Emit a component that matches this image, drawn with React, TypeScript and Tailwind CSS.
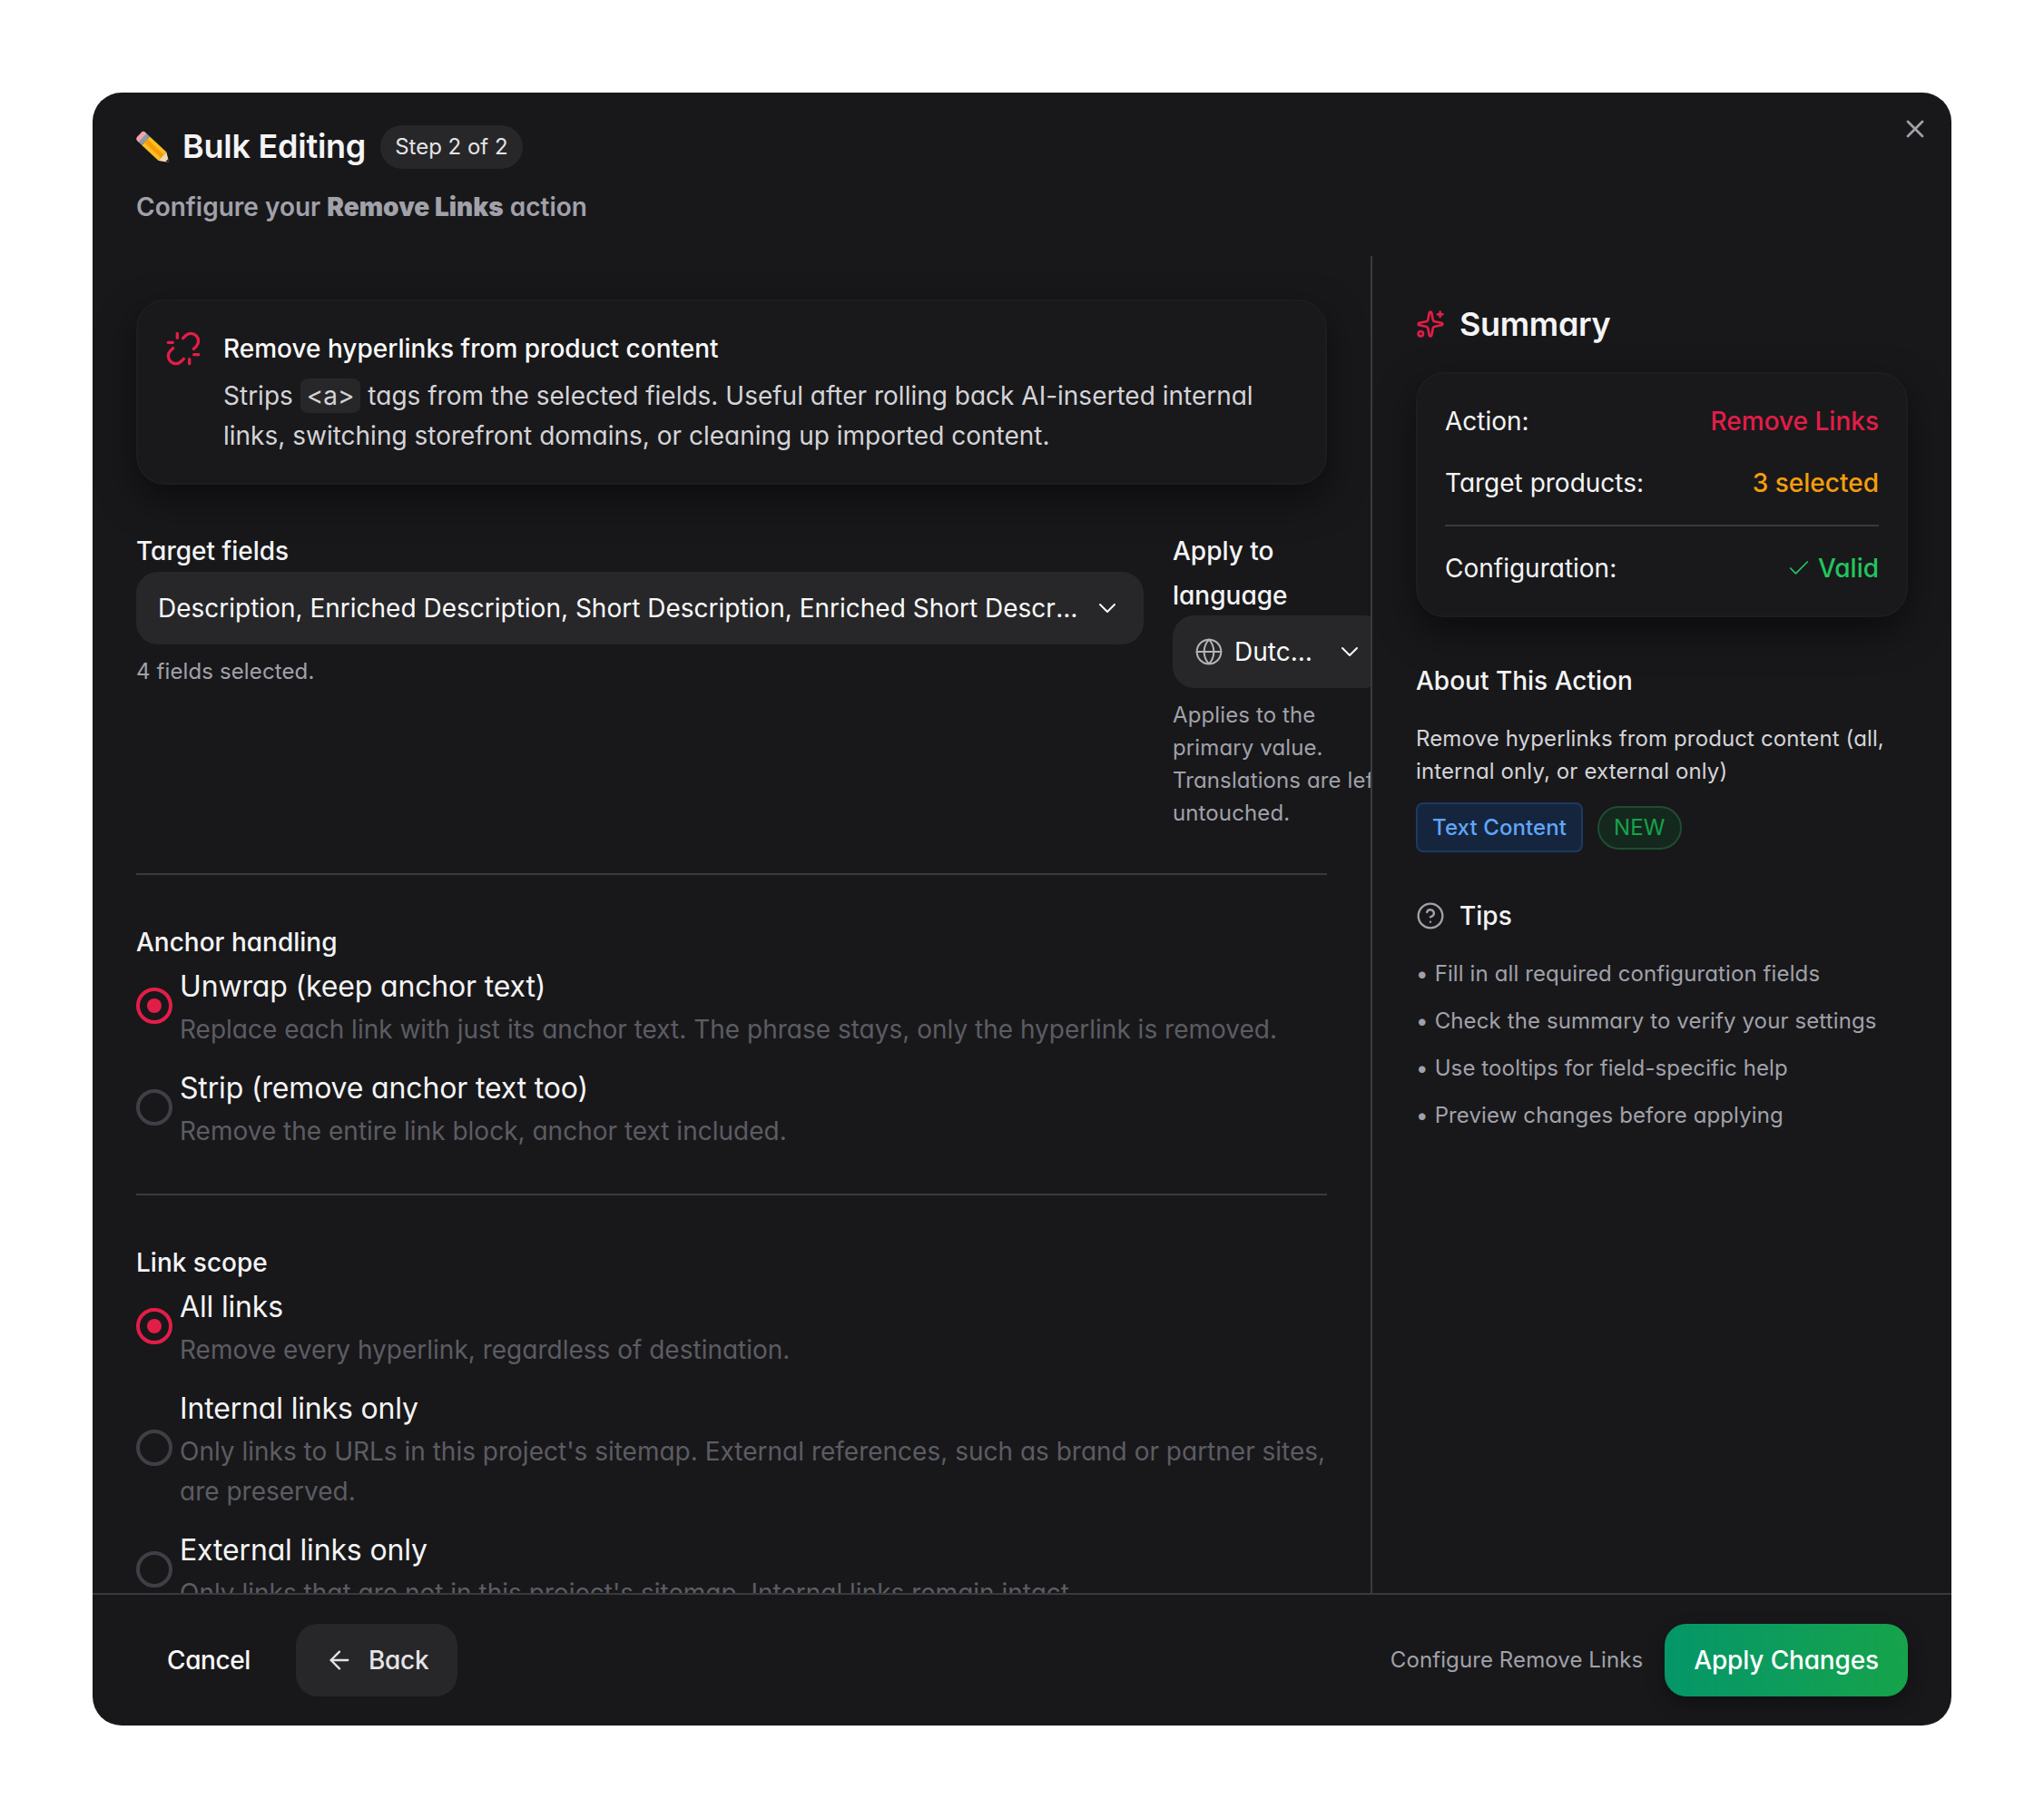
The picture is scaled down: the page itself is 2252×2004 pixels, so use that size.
import { ArrowLeft, Check, ChevronDown, CircleHelp, Globe, Unlink, X } from "lucide-react";

const anchorOptions = [
  {
    label: "Unwrap (keep anchor text)",
    description: "Replace each link with just its anchor text. The phrase stays, only the hyperlink is removed.",
    checked: true,
  },
  {
    label: "Strip (remove anchor text too)",
    description: "Remove the entire link block, anchor text included.",
    checked: false,
  },
];

const scopeOptions = [
  {
    label: "All links",
    description: "Remove every hyperlink, regardless of destination.",
    checked: true,
  },
  {
    label: "Internal links only",
    description:
      "Only links to URLs in this project's sitemap. External references, such as brand or partner sites, are preserved.",
    checked: false,
  },
  {
    label: "External links only",
    description: "Only links that are not in this project's sitemap. Internal links remain intact.",
    checked: false,
  },
];

const tips = [
  "Fill in all required configuration fields",
  "Check the summary to verify your settings",
  "Use tooltips for field-specific help",
  "Preview changes before applying",
];

function PencilEmoji() {
  return (
    <svg width="36" height="36" viewBox="0 0 36 36" className="shrink-0 overflow-visible">
      <g transform="rotate(43 18 18)">
        <rect x="-2" y="11.5" width="8" height="13" rx="3.5" fill="#f0a3ab" />
        <rect x="3" y="11.5" width="5" height="13" fill="#8d99a8" />
        <rect x="8" y="11.5" width="25" height="13" fill="#fbbf24" />
        <rect x="8" y="15.5" width="25" height="5" fill="#f59e0b" />
        <path d="M33 11.5 L43 18 L33 24.5 Z" fill="#f5dcae" />
        <path d="M39.5 15.7 L43 18 L39.5 20.3 Z" fill="#27272a" />
      </g>
    </svg>
  );
}

function SparklesIcon() {
  return (
    <svg
      width="32"
      height="32"
      viewBox="0 0 24 24"
      fill="none"
      stroke="#e11d48"
      strokeWidth="2"
      strokeLinecap="round"
      strokeLinejoin="round"
      className="shrink-0"
    >
      <path d="M11.017 2.814a1 1 0 0 1 1.966 0l1.051 5.558a2 2 0 0 0 1.594 1.594l5.558 1.051a1 1 0 0 1 0 1.966l-5.558 1.051a2 2 0 0 0-1.594 1.594l-1.051 5.558a1 1 0 0 1-1.966 0l-1.051-5.558a2 2 0 0 0-1.594-1.594l-5.558-1.051a1 1 0 0 1 0-1.966l5.558-1.051a2 2 0 0 0 1.594-1.594z" />
      <path d="M20 2v4" />
      <path d="M22 4h-4" />
      <circle cx="4" cy="20" r="2" />
    </svg>
  );
}

function RadioRow({ label, description, checked }: { label: string; description: string; checked: boolean }) {
  return (
    <div className="flex items-center gap-2">
      <span
        className={`mb-[3px] flex h-10 w-10 shrink-0 items-center justify-center rounded-full border-4 ${
          checked ? "border-[#e11d48]" : "border-[#3f3f46]"
        }`}
      >
        {checked && <span className="h-4 w-4 rounded-full bg-[#e11d48]" />}
      </span>
      <div className="min-w-0 flex-1">
        <div className="text-[32px] leading-[50px] tracking-[-0.16px] text-[#f4f4f5]">{label}</div>
        <div className="text-[28px] leading-[44px] text-[#5c5c63]">{description}</div>
      </div>
    </div>
  );
}

function SummaryRow({ label, children }: { label: string; children: React.ReactNode }) {
  return (
    <div className="flex items-center justify-between text-[28px] leading-[44px]">
      <span className="text-[#f4f4f5]">{label}</span>
      {children}
    </div>
  );
}

export default function App() {
  return (
    <div className="min-h-screen bg-white p-[102px] font-['Inter',sans-serif] antialiased [font-feature-settings:'cv11']">
      <div className="relative flex h-[1799px] w-[2048px] flex-col overflow-hidden rounded-[32px] bg-[#18181b]">
        <button className="absolute top-6 right-6 text-[#a1a1aa]">
          <X size={32} strokeWidth={2} />
        </button>

        <header className="px-12 pt-9 pb-8">
          <div className="flex h-12 items-center">
            <PencilEmoji />
            <h1 className="mb-[2px] ml-[15px] text-[36px] font-semibold tracking-[-0.25px] text-[#f4f4f5]">
              Bulk Editing
            </h1>
            <span className="ml-4 flex h-12 items-center rounded-full bg-[#27272a] px-4 text-2xl text-[#e4e4e7]">
              Step 2 of 2
            </span>
          </div>
          <p className="mt-5 text-[28px] leading-[44px] font-semibold text-[#a1a1aa]">
            Configure your <strong className="font-black">Remove Links</strong> action
          </p>
        </header>

        <div className="flex min-h-0 flex-1">
          <div className="w-[1410px] shrink-0 overflow-hidden border-r-2 border-[#3a3a3e] pt-12 pl-12">
            <div className="w-[1312px]">
              <div className="flex gap-6 rounded-[32px] border-2 border-[#1d1d20] bg-[#19191c] px-[30px] pt-[32px] pb-[30px] shadow-[0_16px_40px_rgba(0,0,0,0.5)]">
                <Unlink size={40} className="shrink-0 text-[#e11d48]" />
                <div>
                  <div className="text-[28px] leading-10 font-medium text-[#fafafa]">
                    Remove hyperlinks from product content
                  </div>
                  <p className="mt-[10px] text-[28px] leading-[44px] text-[#d4d4d8]">
                    Strips{" "}
                    <code className="rounded-lg bg-[#27272a] px-[7px] py-[2px] font-['Inter',sans-serif] text-[28px]">
                      {"<a>"}
                    </code>{" "}
                    tags from the selected fields. Useful after rolling back AI-inserted internal links, switching
                    storefront domains, or cleaning up imported content.
                  </p>
                </div>
              </div>

              <div className="mt-12 flex gap-8">
                <div className="w-[1110px] shrink-0">
                  <div className="pt-[3px] text-[28px] leading-[45px] font-medium text-[#f4f4f5]">Target fields</div>
                  <div className="flex h-20 items-center justify-between gap-4 rounded-3xl bg-[#27272a] px-6 text-[#fafafa]">
                    <span className="truncate text-[28px]">
                      Description, Enriched Description, Short Description, Enriched Short Description
                    </span>
                    <ChevronDown size={32} strokeWidth={1.5} className="shrink-0" />
                  </div>
                  <p className="mt-3 text-2xl leading-9 tracking-[0.12px] text-[#a1a1aa]">4 fields selected.</p>
                </div>
                <div className="w-[235px] shrink-0">
                  <div className="-mb-[3px] pt-[1px] text-[28px] leading-[49px] font-medium text-[#f4f4f5]">
                    Apply to language
                  </div>
                  <div className="flex h-20 items-center gap-3 rounded-3xl bg-[#27272a] px-6 text-[#fafafa]">
                    <Globe size={32} strokeWidth={1.5} className="shrink-0 text-[#b4b4b8]" />
                    <span className="w-[86px] truncate text-[28px]">Dutch (Netherlands)</span>
                    <ChevronDown size={32} strokeWidth={1.5} className="ml-auto shrink-0" />
                  </div>
                  <p className="mt-3 text-2xl leading-9 tracking-[0.12px] text-[#a1a1aa]">
                    Applies to the primary value. Translations are left untouched.
                  </p>
                </div>
              </div>

              <div className="mt-12 mb-[50px] h-0.5 bg-[#3a3a3e]" />
              <div className="text-[28px] leading-12 font-medium text-[#f4f4f5]">Anchor handling</div>
              <div className="flex flex-col gap-[18px]">
                {anchorOptions.map((option) => (
                  <RadioRow key={option.label} {...option} />
                ))}
              </div>

              <div className="mt-[47px] mb-[50px] h-0.5 bg-[#3a3a3e]" />
              <div className="text-[28px] leading-12 font-medium text-[#f4f4f5]">Link scope</div>
              <div className="flex flex-col gap-[18px]">
                {scopeOptions.map((option) => (
                  <RadioRow key={option.label} {...option} />
                ))}
              </div>
            </div>
          </div>

          <aside className="flex-1 px-12 pt-12">
            <div className="mb-[26px] flex h-[54px] items-center gap-4">
              <SparklesIcon />
              <h2 className="text-[36px] font-semibold tracking-[-0.35px] text-[#f4f4f5]">Summary</h2>
            </div>
            <div className="flex flex-col gap-6 rounded-[32px] border-2 border-[#1d1d20] bg-[#19191c] px-[30px] py-[30px] shadow-[0_16px_40px_rgba(0,0,0,0.5)]">
              <SummaryRow label="Action:">
                <span className="font-medium text-[#e11d48]">Remove Links</span>
              </SummaryRow>
              <SummaryRow label="Target products:">
                <span className="font-medium text-[#f59e0b]">3 selected</span>
              </SummaryRow>
              <div className="h-0.5 bg-[#3a3a3e]" />
              <SummaryRow label="Configuration:">
                <span className="flex items-center gap-[7px] font-medium text-[#22c55e]">
                  <Check size={28} strokeWidth={1.5} />
                  Valid
                </span>
              </SummaryRow>
            </div>

            <h3 className="mt-12 text-[28px] leading-[44px] font-medium text-[#f4f4f5]">About This Action</h3>
            <p className="mt-6 text-2xl leading-9 tracking-[0.12px] text-[#d4d4d8]">
              Remove hyperlinks from product content (all, internal only, or external only)
            </p>
            <div className="mt-4 flex items-center gap-4">
              <span className="flex h-[55px] items-center rounded-lg border-2 border-[#1c3a61] bg-[#14253d] px-4 text-2xl font-medium tracking-[0.1px] text-[#60a5fa]">
                Text Content
              </span>
              <span className="flex h-12 items-center rounded-full border-2 border-[#1f4d33] bg-[#14281e] px-4 text-2xl tracking-[0.12px] text-[#16a34a]">
                NEW
              </span>
            </div>

            <div className="mt-12 flex h-11 items-center gap-4">
              <CircleHelp size={32} strokeWidth={1.75} className="shrink-0 text-[#a1a1aa]" />
              <h3 className="text-[28px] font-medium text-[#f4f4f5]">Tips</h3>
            </div>
            <ul className="mt-6 flex flex-col gap-4">
              {tips.map((tip) => (
                <li key={tip} className="flex gap-[7px] text-2xl leading-9 tracking-[0.12px] text-[#a1a1aa]">
                  <span>•</span>
                  {tip}
                </li>
              ))}
            </ul>
          </aside>
        </div>

        <footer className="flex items-center justify-between border-t-2 border-[#3a3a3e] px-12 py-8">
          <div className="flex items-center gap-4">
            <button className="h-20 px-[34px] text-[28px] font-medium tracking-[-0.4px] text-[#fafafa]">Cancel</button>
            <button className="flex h-20 items-center gap-4 rounded-3xl bg-[#27272a] px-8 text-[28px] font-medium tracking-[-0.3px] text-[#e4e4e7]">
              <ArrowLeft size={32} strokeWidth={1.75} />
              Back
            </button>
          </div>
          <div className="flex items-center gap-6">
            <span className="text-2xl tracking-[0.1px] text-[#a1a1aa]">Configure Remove Links</span>
            <button className="h-20 rounded-3xl bg-gradient-to-r from-[#059669] to-[#16a34a] px-8 text-[28px] font-medium tracking-[-0.15px] text-white shadow-[0_8px_20px_rgba(0,0,0,0.3)]">
              Apply Changes
            </button>
          </div>
        </footer>
      </div>
    </div>
  );
}
